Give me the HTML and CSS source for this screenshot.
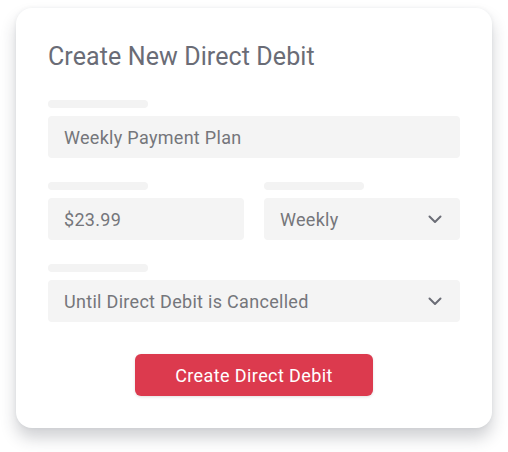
FILE: index.html
```html
<!DOCTYPE html>
<html>
<head>
<meta charset="utf-8">
<link rel="stylesheet" href="styles.css">
</head>
<body>
<div class="card">
  <h1 class="title">Create New Direct Debit</h1>
  <div class="field">
    <div class="label"></div>
    <div class="input">Weekly Payment Plan</div>
  </div>
  <div class="row">
    <div class="field">
      <div class="label"></div>
      <div class="input">$23.99</div>
    </div>
    <div class="field">
      <div class="label"></div>
      <div class="input select">Weekly
        <svg class="chev" width="14" height="9" viewBox="0 0 14 9"><path d="M1.5 1.5 L7 7 L12.5 1.5" fill="none" stroke="#6b6d76" stroke-width="2" stroke-linecap="round" stroke-linejoin="round"/></svg>
      </div>
    </div>
  </div>
  <div class="field">
    <div class="label"></div>
    <div class="input select">Until Direct Debit is Cancelled
      <svg class="chev" width="14" height="9" viewBox="0 0 14 9"><path d="M1.5 1.5 L7 7 L12.5 1.5" fill="none" stroke="#6b6d76" stroke-width="2" stroke-linecap="round" stroke-linejoin="round"/></svg>
    </div>
  </div>
  <div class="actions">
    <button class="btn">Create Direct Debit</button>
  </div>
</div>
</body>
</html>
```

FILE: styles.css
```css
* { box-sizing: border-box; }
html, body { margin: 0; padding: 0; background: #ffffff; }
body {
  font-family: Roboto, "Noto Sans", sans-serif;
  padding: 8px 16px 24px 16px;
  min-height: 452px;
}
.card {
  width: 476px;
  height: 420px;
  background: #ffffff;
  border-radius: 16px;
  box-shadow: 0 10px 16px rgba(40, 44, 60, 0.22), 0 0 4px rgba(40, 44, 60, 0.06);
  padding: 35px 32px 32px 32px;
  display: flex;
  flex-direction: column;
}
.title {
  margin: 0 0 29px 0;
  font-size: 25px;
  line-height: 28px;
  font-weight: 400;
  color: #6a6c76;
  letter-spacing: 0.1px;
}
.field {
  display: flex;
  flex-direction: column;
  gap: 8px;
  margin-bottom: 24px;
}
.row {
  display: grid;
  grid-template-columns: 1fr 1fr;
  column-gap: 20px;
}
.label {
  width: 100px;
  height: 8px;
  border-radius: 4px;
  background: #f3f3f3;
}
.input {
  height: 42px;
  background: #f4f4f4;
  border-radius: 4px;
  padding: 0 16px;
  display: flex;
  align-items: center;
  justify-content: space-between;
  font-size: 18px;
  color: #75767b;
  letter-spacing: 0.3px;
}
.select { padding-right: 18px; }
.chev { display: block; }
.actions {
  display: flex;
  justify-content: center;
  margin-top: 8px;
}
.btn {
  width: 238px;
  height: 42px;
  border: none;
  border-radius: 6px;
  background: #dc3a4e;
  color: #ffffff;
  font-family: Roboto, "Noto Sans", sans-serif;
  font-size: 18px;
  letter-spacing: 0.4px;
  box-shadow: 0 1px 3px rgba(0, 0, 0, 0.12);
  padding: 0;
}
```
